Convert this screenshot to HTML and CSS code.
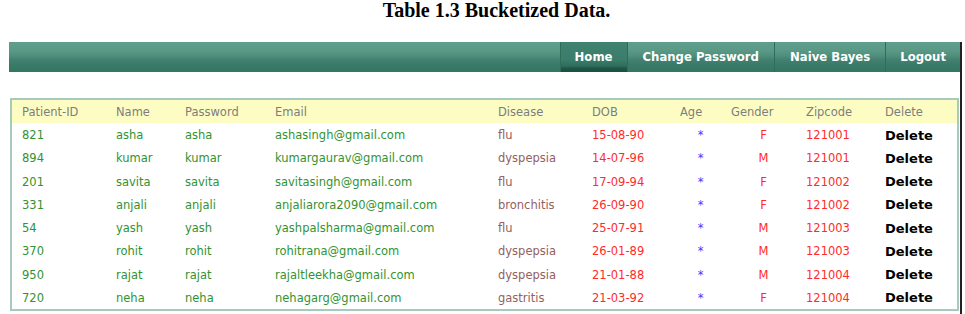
FILE: index.html
```html
<!DOCTYPE html>
<html lang="en">
<head>
  <meta charset="UTF-8" />
  <title>Bucketized Data</title>
  <link rel="stylesheet" href="styles.css">
</head>
<body>
  <h1 class="caption">Table 1.3 Bucketized Data.</h1>

  <div class="frame">
    <div class="menu">
      <a class="menu-item active" href="#">Home</a>
      <a class="menu-item" href="#">Change Password</a>
      <a class="menu-item" href="#">Naive Bayes</a>
      <a class="menu-item last" href="#">Logout</a>
    </div>

    <table class="records">
      <colgroup>
        <col style="width:95px"><col style="width:69px"><col style="width:90px"><col style="width:223px">
        <col style="width:94px"><col style="width:88px"><col style="width:51px"><col style="width:75px">
        <col style="width:79px"><col>
      </colgroup>
      <thead>
        <tr>
          <th>Patient-ID</th><th>Name</th><th>Password</th><th>Email</th><th>Disease</th>
          <th>DOB</th><th>Age</th><th>Gender</th><th>Zipcode</th><th>Delete</th>
        </tr>
      </thead>
      <tbody>
        <tr><td class="g">821</td><td class="g">asha</td><td class="g">asha</td><td class="g">ashasingh@gmail.com</td><td class="dis">flu</td><td class="r">15-08-90</td><td class="age">*</td><td class="sex">F</td><td class="r">121001</td><td class="del">Delete</td></tr>
        <tr><td class="g">894</td><td class="g">kumar</td><td class="g">kumar</td><td class="g">kumargaurav@gmail.com</td><td class="dis">dyspepsia</td><td class="r">14-07-96</td><td class="age">*</td><td class="sex">M</td><td class="r">121001</td><td class="del">Delete</td></tr>
        <tr><td class="g">201</td><td class="g">savita</td><td class="g">savita</td><td class="g">savitasingh@gmail.com</td><td class="dis">flu</td><td class="r">17-09-94</td><td class="age">*</td><td class="sex">F</td><td class="r">121002</td><td class="del">Delete</td></tr>
        <tr><td class="g">331</td><td class="g">anjali</td><td class="g">anjali</td><td class="g">anjaliarora2090@gmail.com</td><td class="dis">bronchitis</td><td class="r">26-09-90</td><td class="age">*</td><td class="sex">F</td><td class="r">121002</td><td class="del">Delete</td></tr>
        <tr><td class="g">54</td><td class="g">yash</td><td class="g">yash</td><td class="g">yashpalsharma@gmail.com</td><td class="dis">flu</td><td class="r">25-07-91</td><td class="age">*</td><td class="sex">M</td><td class="r">121003</td><td class="del">Delete</td></tr>
        <tr><td class="g">370</td><td class="g">rohit</td><td class="g">rohit</td><td class="g">rohitrana@gmail.com</td><td class="dis">dyspepsia</td><td class="r">26-01-89</td><td class="age">*</td><td class="sex">M</td><td class="r">121003</td><td class="del">Delete</td></tr>
        <tr><td class="g">950</td><td class="g">rajat</td><td class="g">rajat</td><td class="g">rajaltleekha@gmail.com</td><td class="dis">dyspepsia</td><td class="r">21-01-88</td><td class="age">*</td><td class="sex">M</td><td class="r">121004</td><td class="del">Delete</td></tr>
        <tr><td class="g">720</td><td class="g">neha</td><td class="g">neha</td><td class="g">nehagarg@gmail.com</td><td class="dis">gastritis</td><td class="r">21-03-92</td><td class="age">*</td><td class="sex">F</td><td class="r">121004</td><td class="del">Delete</td></tr>
      </tbody>
    </table>
  </div>
</body>
</html>
```

FILE: styles.css
```css
body {
  margin: 0;
  padding: 0;
  background: #fff;
  font-family: "DejaVu Sans", Verdana, sans-serif;
  font-size: 11.5px;
}

.caption {
  margin: 0 0 22px 0;
  padding-left: 28px;
  font-family: "Liberation Serif", "Times New Roman", serif;
  font-size: 20px;
  line-height: 20px;
  font-weight: bold;
  text-align: center;
  color: #000;
}

.frame {
  margin-left: 9px;
  width: 951px;
  height: 272px;
  border-right: 2px solid #222;
}

.menu {
  display: flex;
  justify-content: flex-end;
  height: 30px;
  padding-right: 2px;
  background: linear-gradient(#5f9e8b 0%, #5b9a87 25%, #4f907c 45%, #437f6f 60%, #3a7b68 75%, #357663 100%);
}

.menu-item {
  display: flex;
  align-items: center;
  padding: 0 15px;
  border-left: 1px solid #2f6c5a;
  color: #fff;
  font-size: 11.7px;
  font-weight: bold;
  text-decoration: none;
}

.menu-item.active {
  padding: 0 14px;
  background: linear-gradient(#3e826f 0%, #3a7d6a 60%, #2f6e5b 80%, #1e5646 88%, #1a4f40 100%);
}

.menu-item.last {
  padding: 0 12px 0 14px;
}

.records {
  margin: 26px 0 0 1px;
  width: 949px;
  table-layout: fixed;
  border-collapse: collapse;
  border: 2px solid #a7cbbb;
}

.records th {
  height: 22px;
  padding: 1px 0 0 10px;
  background: #fdfdc3;
  color: #7d7d7d;
  font-weight: normal;
  text-align: left;
}

.records td {
  height: 22.25px;
  padding: 1px 0 0 10px;
  white-space: nowrap;
}

.g { color: #319331; }
.dis { color: #946060; }
.r { color: #ff2b2b; }

.age {
  color: #3b3bff;
  text-align: center;
}

.sex {
  color: #ff2b2b;
  text-align: center;
}

.del {
  color: #000;
  font-size: 13px;
  font-weight: bold;
}
```
